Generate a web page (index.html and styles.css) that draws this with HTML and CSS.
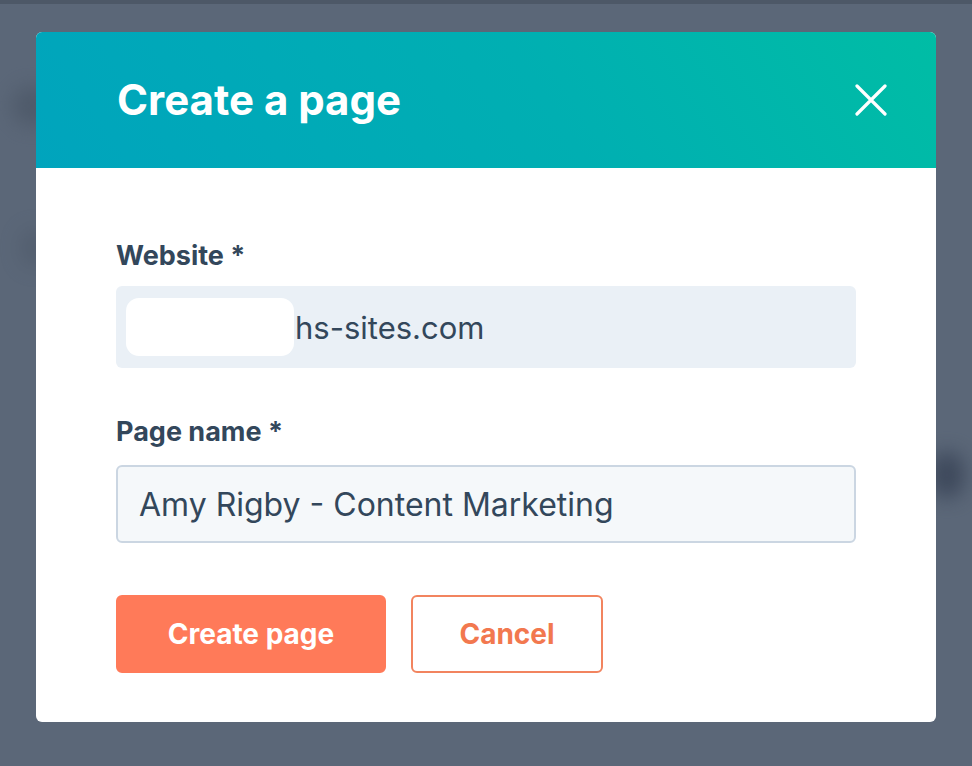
FILE: index.html
```html
<!DOCTYPE html>
<html lang="en">
<head>
<meta charset="utf-8">
<title>Create a page</title>
<link rel="stylesheet" href="styles.css">
</head>
<body>
<div class="topbar"></div>
<div class="ghost ghost-a"></div>
<div class="ghost ghost-b"></div>
<div class="ghost ghost-c"></div>
<div class="modal">
  <div class="modal-header">
    <h1 class="modal-title">Create a page</h1>
    <button class="close-btn" aria-label="Close">
      <svg width="32" height="32" viewBox="0 0 32 32"><path d="M2 2L30 30M30 2L2 30" stroke="#fff" stroke-width="3.2" stroke-linecap="round" fill="none"/></svg>
    </button>
  </div>
  <div class="modal-body">
    <label class="field-label label-first">Website *</label>
    <div class="input input-readonly">
      <span class="redacted"></span><span class="input-text">hs-sites.com</span>
    </div>
    <label class="field-label label-second">Page name *</label>
    <div class="input input-editable">
      <span class="input-text">Amy Rigby - Content Marketing</span>
    </div>
    <div class="actions">
      <button class="btn btn-primary">Create page</button>
      <button class="btn btn-secondary">Cancel</button>
    </div>
  </div>
</div>
</body>
</html>
```
FILE: styles.css
```css
html, body {
  margin: 0;
  padding: 0;
}
body {
  width: 972px;
  height: 766px;
  overflow: hidden;
  background: #5b6778;
  font-family: Inter, "Noto Sans", sans-serif;
  position: relative;
}
.topbar {
  height: 4px;
  background: #4d5867;
}
.ghost {
  position: absolute;
  background: #45505f;
  filter: blur(10px);
  opacity: 0.55;
}
.ghost-a { left: 12px; top: 86px; width: 40px; height: 40px; border-radius: 20px; }
.ghost-b { left: 20px; top: 228px; width: 30px; height: 40px; border-radius: 16px; opacity: 0.35; }
.ghost-c { left: 930px; top: 452px; width: 34px; height: 46px; border-radius: 18px; background: #3a4558; opacity: 0.9; }
.modal {
  position: relative;
  width: 900px;
  margin: 28px 0 0 36px;
  border-radius: 6px;
  overflow: hidden;
  background: #fff;
}
.modal-header {
  height: 136px;
  box-sizing: border-box;
  padding: 0 49px 0 81px;
  display: flex;
  align-items: center;
  justify-content: space-between;
  background: linear-gradient(-303deg, #00a4bd, #00afb2 56%, #00bda5);
}
.modal-title {
  margin: 0;
  color: #fff;
  font-size: 42px;
  font-weight: 700;
  line-height: 44px;
}
.close-btn {
  border: 0;
  padding: 0;
  background: none;
  width: 32px;
  height: 32px;
  display: block;
}
.close-btn svg { display: block; }
.modal-body {
  padding: 70px 80px 49px 80px;
}
.field-label {
  display: block;
  color: #33475b;
  font-size: 27px;
  font-weight: 700;
  line-height: 36px;
}
.label-first { margin-bottom: 12px; }
.label-second { margin-top: 46px; margin-bottom: 15px; }
.input {
  box-sizing: border-box;
  width: 740px;
  border-radius: 6px;
  display: flex;
  align-items: center;
  color: #33475b;
  font-size: 32px;
}
.input-readonly {
  height: 82px;
  background: #eaf0f6;
  padding-left: 10px;
  font-size: 31px;
}
.redacted {
  width: 168px;
  height: 58px;
  border-radius: 13px;
  background: #fff;
  filter: blur(0.6px);
  margin-right: 1px;
}
.input-editable {
  height: 78px;
  background: #f5f8fa;
  border: 2px solid #cbd6e2;
  padding-left: 21px;
}
.actions {
  display: flex;
  gap: 25px;
  margin-top: 52px;
}
.btn {
  height: 78px;
  box-sizing: border-box;
  border-radius: 6px;
  font-family: inherit;
  font-size: 28px;
  font-weight: 700;
  padding: 0;
}
.btn-primary {
  width: 270px;
  background: #ff7a59;
  border: 2px solid #ff7a59;
  color: #fff;
}
.btn-secondary {
  width: 192px;
  background: #fff;
  border: 2px solid #f2845f;
  color: #f2784f;
}
```
